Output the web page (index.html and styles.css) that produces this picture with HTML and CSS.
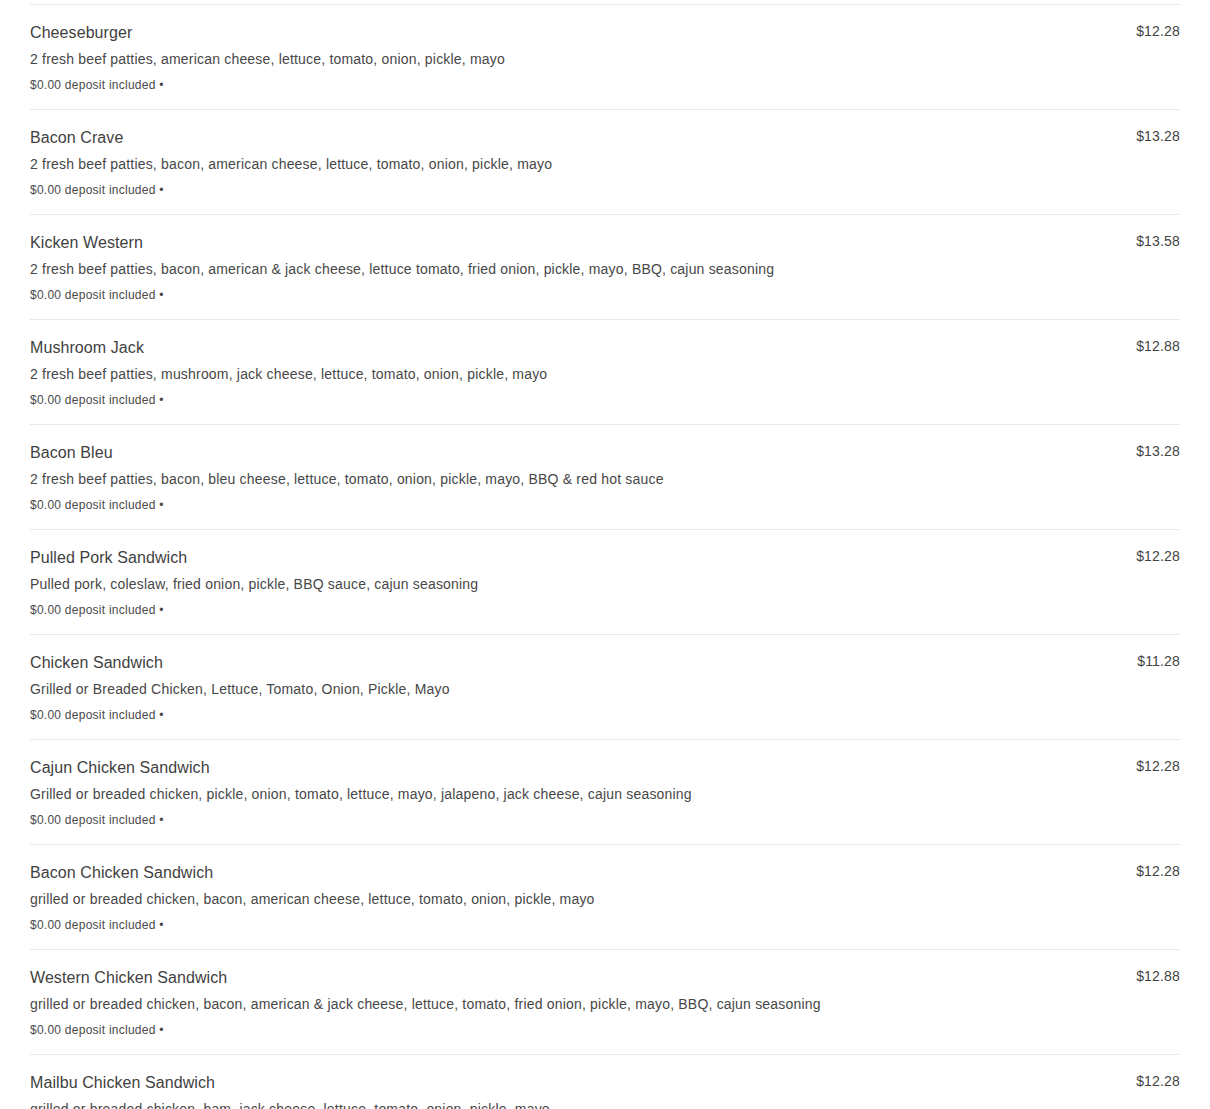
FILE: index.html
```html
<!DOCTYPE html>
<html>
<head>
<meta charset="utf-8">
<link rel="stylesheet" href="styles.css">
</head>
<body>
<div class="menu">
  <div class="item">
    <div class="info">
      <div class="name">Cheeseburger</div>
      <div class="desc">2 fresh beef patties, american cheese, lettuce, tomato, onion, pickle, mayo</div>
      <div class="deposit">$0.00 deposit included •</div>
    </div>
    <div class="price">$12.28</div>
  </div>
  <div class="item">
    <div class="info">
      <div class="name">Bacon Crave</div>
      <div class="desc">2 fresh beef patties, bacon, american cheese, lettuce, tomato, onion, pickle, mayo</div>
      <div class="deposit">$0.00 deposit included •</div>
    </div>
    <div class="price">$13.28</div>
  </div>
  <div class="item">
    <div class="info">
      <div class="name">Kicken Western</div>
      <div class="desc">2 fresh beef patties, bacon, american &amp; jack cheese, lettuce tomato, fried onion, pickle, mayo, BBQ, cajun seasoning</div>
      <div class="deposit">$0.00 deposit included •</div>
    </div>
    <div class="price">$13.58</div>
  </div>
  <div class="item">
    <div class="info">
      <div class="name">Mushroom Jack</div>
      <div class="desc">2 fresh beef patties, mushroom, jack cheese, lettuce, tomato, onion, pickle, mayo</div>
      <div class="deposit">$0.00 deposit included •</div>
    </div>
    <div class="price">$12.88</div>
  </div>
  <div class="item">
    <div class="info">
      <div class="name">Bacon Bleu</div>
      <div class="desc">2 fresh beef patties, bacon, bleu cheese, lettuce, tomato, onion, pickle, mayo, BBQ &amp; red hot sauce</div>
      <div class="deposit">$0.00 deposit included •</div>
    </div>
    <div class="price">$13.28</div>
  </div>
  <div class="item">
    <div class="info">
      <div class="name">Pulled Pork Sandwich</div>
      <div class="desc">Pulled pork, coleslaw, fried onion, pickle, BBQ sauce, cajun seasoning</div>
      <div class="deposit">$0.00 deposit included •</div>
    </div>
    <div class="price">$12.28</div>
  </div>
  <div class="item">
    <div class="info">
      <div class="name">Chicken Sandwich</div>
      <div class="desc">Grilled or Breaded Chicken, Lettuce, Tomato, Onion, Pickle, Mayo</div>
      <div class="deposit">$0.00 deposit included •</div>
    </div>
    <div class="price">$11.28</div>
  </div>
  <div class="item">
    <div class="info">
      <div class="name">Cajun Chicken Sandwich</div>
      <div class="desc">Grilled or breaded chicken, pickle, onion, tomato, lettuce, mayo, jalapeno, jack cheese, cajun seasoning</div>
      <div class="deposit">$0.00 deposit included •</div>
    </div>
    <div class="price">$12.28</div>
  </div>
  <div class="item">
    <div class="info">
      <div class="name">Bacon Chicken Sandwich</div>
      <div class="desc">grilled or breaded chicken, bacon, american cheese, lettuce, tomato, onion, pickle, mayo</div>
      <div class="deposit">$0.00 deposit included •</div>
    </div>
    <div class="price">$12.28</div>
  </div>
  <div class="item">
    <div class="info">
      <div class="name">Western Chicken Sandwich</div>
      <div class="desc">grilled or breaded chicken, bacon, american &amp; jack cheese, lettuce, tomato, fried onion, pickle, mayo, BBQ, cajun seasoning</div>
      <div class="deposit">$0.00 deposit included •</div>
    </div>
    <div class="price">$12.88</div>
  </div>
  <div class="item">
    <div class="info">
      <div class="name">Mailbu Chicken Sandwich</div>
      <div class="desc">grilled or breaded chicken, ham, jack cheese, lettuce, tomato, onion, pickle, mayo</div>
      <div class="deposit">$0.00 deposit included •</div>
    </div>
    <div class="price">$12.28</div>
  </div>
</div>
</body>
</html>
```

FILE: styles.css
```css
html, body {
  margin: 0;
  padding: 0;
  background: #fff;
}
body {
  font-family: "Liberation Sans", Arial, Helvetica, sans-serif;
  color: #444;
}
.menu {
  margin: 4px 30px 0 30px;
  border-top: 1px solid #e9e9e9;
}
.item {
  display: flex;
  justify-content: space-between;
  align-items: flex-start;
  padding: 18px 0 16px 0;
  border-bottom: 1px solid #e9e9e9;
}
.info {
  display: flex;
  flex-direction: column;
}
.name {
  font-size: 16px;
  line-height: 20px;
  letter-spacing: 0.08px;
  color: #3f3f3f;
}
.desc {
  margin-top: 6px;
  font-size: 14px;
  line-height: 20px;
  letter-spacing: 0.19px;
  color: #474747;
}
.deposit {
  margin-top: 8px;
  font-size: 12px;
  line-height: 16px;
  letter-spacing: 0.25px;
  color: #4a4a4a;
}
.price {
  font-size: 14px;
  line-height: 16px;
  letter-spacing: 0.17px;
  color: #444;
}
```
